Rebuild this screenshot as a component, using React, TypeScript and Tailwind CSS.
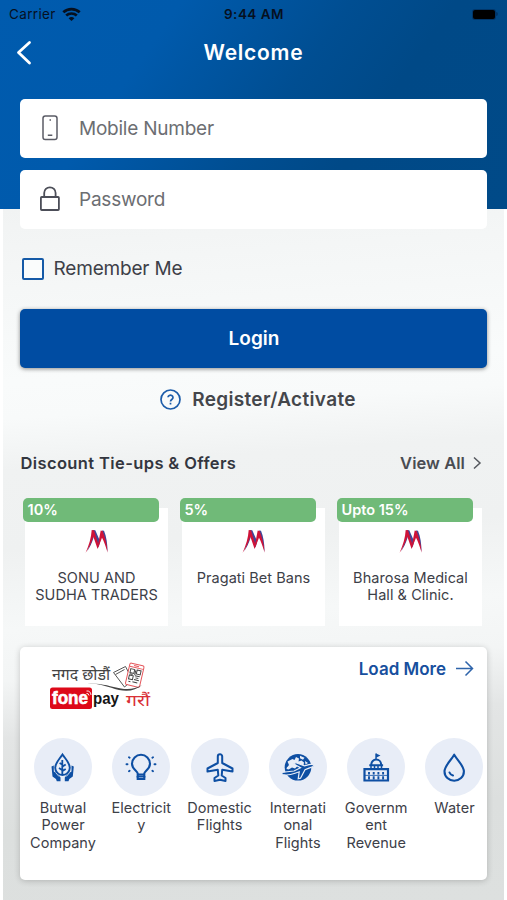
import React from "react";

const offers = [
  { badge: "10%", lines: ["SONU AND", "SUDHA TRADERS"] },
  { badge: "5%", lines: ["Pragati Bet Bans"] },
  { badge: "Upto 15%", lines: ["Bharosa Medical", "Hall & Clinic."] },
];

function MerchantLogo() {
  return (
    <svg width="24" height="24" viewBox="0 0 24 24" className="block">
      <path d="M8 1L10.300 1.200 15.200 12.500 13.600 18.500 8.500 7zM17 1.500L19 1.800C21.500 8 22.600 15 22.500 23 21.500 17 19.500 11 17.500 6.500zM7.300 6L8.800 8C7 14 4.500 19 2 22.500 4.500 17 6.200 11.500 7.300 6z" fill="#3f4799" />
      <path d="M6.700 1L9 1.300 13.200 14.500 15.700 1.600 17.600 2C20.300 9 22.200 16 22.600 23.800 21 18 19 12.500 17 8.800L12.600 20 8.300 7.500C6.800 13 4 19 .6 23.800 4 16 6.200 9 6.700 1Z" fill="#cf1338" />
    </svg>
  );
}

function WifiIcon() {
  return (
    <svg width="19" height="15" viewBox="0 0 19 15" fill="none" stroke="#06101f" strokeWidth="2.700">
      <path d="M1.300 5.200c4.500-4.200 11.900-4.200 16.400 0M4.200 8.600c3-2.800 7.600-2.800 10.600 0" />
      <path d="M6.600 11.200c1.700-1.500 4.100-1.500 5.800 0L9.500 14z" fill="#06101f" stroke="none" />
    </svg>
  );
}

function FonepayBanner() {
  return (
    <svg width="114" height="50" viewBox="0 0 114 50" className="block overflow-visible">
      <text x="4" y="19" fontSize="15.500" textLength="58" lengthAdjust="spacingAndGlyphs" fill="#444" className="font-['Noto_Sans_Devanagari','Lohit_Devanagari','Noto_Sans',sans-serif]">नगद छोडौं</text>
      <g fill="#fff" stroke="#555" strokeWidth="1">
        <path d="M65.500 11.500l12-6 7 13.500-8 7z" />
        <path d="M67.500 13.500l9-5" />
      </g>
      <g transform="rotate(13 86 14)">
        <rect x="79.500" y="3" width="14.500" height="22" rx="1.500" fill="#fff" stroke="#e5575c" />
        <path d="M80 6.500h13.500M84 4.800h5" stroke="#e5575c" />
        <path d="M81.500 8.500h4v4h-4zM88 8.500h4v4h-4zM81.500 15h4v4h-4z" fill="none" stroke="#444" strokeWidth="1" />
        <path d="M87 14.500h5M88 16.500h3M87 18.500h5M82 21.300h2M86 21h5M86.700 9v5M81.500 13.800h3" stroke="#444" />
      </g>
      <path d="M39 22.500c15-.7 23 3 34 5 8 1.300 15 .2 21-3.500-6 5.500-14 6.800-23 5-11-2.800-18-6.500-32-6.500z" fill="#444" />
      <rect x="2" y="26.500" width="42" height="21.500" rx="2.500" fill="#dd0919" />
      <text x="4" y="43.200" fontSize="18.500" textLength="36" lengthAdjust="spacingAndGlyphs" fontWeight="700" fill="#fff" stroke="#fff" strokeWidth=".6" className="font-['Liberation_Sans',sans-serif]">fone</text>
      <path d="M38.500 32.500q2-.5 2.500 2M38.500 30q4-.5 4.500 4" fill="none" stroke="#fff" strokeWidth=".9" />
      <text x="45" y="42.800" fontSize="17" textLength="26" lengthAdjust="spacingAndGlyphs" fontWeight="700" fill="#151515" className="font-['Liberation_Sans',sans-serif]">pay</text>
      <text x="78" y="45" fontSize="16" textLength="24" lengthAdjust="spacingAndGlyphs" fill="#d93036" className="font-['Noto_Sans_Devanagari','Lohit_Devanagari','Noto_Sans',sans-serif]">गरौं</text>
    </svg>
  );
}

function PowerIcon() {
  return (
    <svg width="32" height="32" viewBox="0 0 32 32" fill="none" stroke="#0e4fa3" strokeWidth="1.900">
      <path d="M15.500 3.500C12 8.700 8.200 12 8.200 16.700a7.300 7.300 0 0 0 14.600 0C22.800 12 19 8.700 15.500 3.500z" />
      <path d="M15.300 9v14M15.200 13.500l-2.600-1.500M15.500 15.500l3.200-2M15.500 20l3.200-2M15 19l-3-2" strokeWidth="1.800" />
      <g fill="#0e4fa3" stroke="none">
        <path d="M4.500 15.500l2.300-1v6l4 2.500 2.700 3.500v3.700H9.800L9 28l-3.500-2.500zM26.800 15.500l-2.300-1v6l-4 2.500-2.700 3.500v3.700h3.700l.8-2.200 3.500-2.500z" />
      </g>
      <path d="M9 22l3 3.500M22.300 22l-3 3.500" stroke="#e8edf7" strokeWidth=".8" />
    </svg>
  );
}

function BulbIcon() {
  return (
    <svg width="32" height="32" viewBox="0 0 32 32" fill="none" stroke="#0e4fa3" strokeWidth="2.100">
      <path d="M12.700 25.500v-3c0-2.300-5.700-4-5.700-9.700a9 9 0 0 1 18 0c0 5.700-5.700 7.400-5.700 9.700v3z" />
      <path d="M12.500 23.500h7M12.700 25v3h6.600v-3" />
      <path d="M4 6.300l.6.400M1.500 13.200h1M4 20.200l.6-.4M28 6.300l-.6.400M29.500 13.200h1M28 20.200l-.6-.4" strokeWidth="1.900" strokeLinecap="round" />
    </svg>
  );
}

function PlaneIcon() {
  return (
    <svg width="32" height="32" viewBox="0 0 32 32" fill="none" stroke="#0e4fa3" strokeWidth="2" strokeLinejoin="round">
      <path d="M13.800 12V5.500a2.200 2.200 0 0 1 4.400 0V12l10.300 5.500v3L18.200 18.800l-.5 5.700 3.800 2.500v3L16 28.800 10.500 30v-3l3.800-2.500-.5-5.700L3.500 20.500v-3z" />
    </svg>
  );
}

function GlobeIcon() {
  return (
    <svg width="34" height="32" viewBox="0 0 34 32" fill="none">
      <circle cx="17" cy="16.300" r="13.300" fill="#0e4fa3" />
      <path d="M6.500 10.500l5-2.500 2 1 1.500-3 3 1.500-.5 3 3-1 2.500 2-.5 3-4 2-2-1.500-2.500 2.500-3-1-2.500 1.500-2.500-1.500 2-2.500z" fill="#e8edf7" />
      <path d="M19 4.800l4.500 2-1.500 2-3-1.500zM24 10l3 2-2.500 1.500zM6 16l3 .5-1 2-2.500-.5z" fill="#e8edf7" />
      <path d="M1 21.500c3-.5 7-1 12-1.500l6.500-3.200-7-4 2.500-1 8.500 3 4.500-1.200c2.500-.5 4.500 0 5.500.8-1 1.400-3 2-5.500 2.700l-4 1.600-4.500 8.500-2.300.6 1-7-4.200 1.500C9.500 24 4.500 24.300 1 23.500z" fill="#0e4fa3" stroke="#e8edf7" strokeWidth="1.200" />
    </svg>
  );
}

function GovernmentIcon() {
  return (
    <svg width="32" height="32" viewBox="0 0 32 32" fill="none" stroke="#0e4fa3" strokeWidth="2">
      <path d="M16 9V2.500" strokeWidth="1.400" />
      <path d="M16 2.500l4.500 2-4.500 2.200z" fill="#0e4fa3" stroke="none" />
      <path d="M11.300 14v-.5a4.900 4.900 0 0 1 9.800 0v.5M9.300 14.200h13.800" />
      <path d="M11 18.500V15M21.500 18.500V15M14.500 18v-3M18 18v-3" strokeWidth="1.500" />
      <path d="M4.500 18.200h23.500V29.500H4.500z" strokeWidth="2.200" />
      <path d="M9 21v2.600M13.700 21v2.600M18.400 21v2.600M23.100 21v2.600M9 25.300v3.200M13.700 25.300v3.200M18.400 25.300v3.200M23.100 25.300v3.200" strokeWidth="1.900" />
      <path d="M5 24.400h23" strokeWidth=".8" />
    </svg>
  );
}

function WaterIcon() {
  return (
    <svg width="32" height="32" viewBox="0 0 32 32" fill="none" stroke="#0e4fa3" strokeWidth="2.100">
      <path d="M16.200 3.700C12.500 10 6.500 15 6.500 20.500a9.700 9.200 0 0 0 19.400 0C25.900 15 20 10 16.200 3.700z" strokeLinejoin="round" />
      <path d="M11.500 21.500c.6 1.600 1.700 2.500 3.500 3" strokeLinecap="round" />
    </svg>
  );
}

const services = [
  { icon: <PowerIcon />, lines: ["Butwal", "Power", "Company"] },
  { icon: <BulbIcon />, lines: ["Electricit", "y"] },
  { icon: <PlaneIcon />, lines: ["Domestic", "Flights"] },
  { icon: <GlobeIcon />, lines: ["Internati", "onal", "Flights"] },
  { icon: <GovernmentIcon />, lines: ["Governm", "ent", "Revenue"] },
  { icon: <WaterIcon />, lines: ["Water"] },
];

export default function App() {
  return (
    <div className="relative isolate h-[900px] w-[507px] overflow-hidden bg-white font-['Inter',sans-serif] text-[#3d4048]">
      <div className="absolute inset-x-0 top-0 -z-10 h-[209px] bg-[linear-gradient(125deg,#005bae_0%,#005aac_28%,#004e92_54%,#004987_70%,#004a88_100%)]" />
      <div className="absolute inset-x-[3px] bottom-0 top-[209px] -z-10 bg-[linear-gradient(176deg,#f1f3f3_0%,#f4f6f6_8%,#f9fbfb_24%,#f8fafa_29%,#f0f2f2_36%,#eff1f1_47%,#f6f8f8_58%,#f3f5f5_65%,#e3e5e5_73%,#dcdfde_86%,#dde0df_100%)]" />

      <div className="grid h-7 grid-cols-3 items-center px-[9px] text-[13.500px] text-[#06101f]">
        <div className="flex items-center gap-[6px]">
          <span className="tracking-[0.350px]">Carrier</span>
          <WifiIcon />
        </div>
        <span className="pl-px text-center font-semibold tracking-[0.500px]">9:44 AM</span>
        <div className="flex items-center justify-end gap-px">
          <span className="h-[9px] w-[22px] rounded-[2px] bg-black ring-1 ring-[#00366a]" />
          <span className="h-1 w-[2px] rounded-r bg-[#00366a]" />
        </div>
      </div>

      <header className="grid h-[49px] grid-cols-[40px_1fr_40px] items-center px-[15px]">
        <svg width="18" height="26" viewBox="0 0 18 26" fill="none" stroke="#fff" strokeWidth="2.800" strokeLinecap="round" strokeLinejoin="round">
          <path d="M14.500 2.500L3.500 12.500l11 10.500" />
        </svg>
        <h1 className="text-center text-[21px] font-semibold tracking-[0.750px] text-white">Welcome</h1>
      </header>

      <main className="px-5 pt-[21.500px]">
        <div className="flex flex-col gap-3 text-[19px] tracking-[-0.230px] text-[#6c6e72]">
          <div className="flex h-[59px] items-center rounded-[5px] bg-white pl-[17.500px]">
            <svg width="24" height="28" viewBox="0 0 24 28" fill="none" stroke="#5b5c66" strokeWidth="1.500">
              <rect x="5" y="2" width="14" height="23.500" rx="2.300" />
              <path d="M9.800 21.300h4.500M11.500 6H13" />
            </svg>
            <span className="ml-[17.500px] mt-[2px]">Mobile Number</span>
          </div>
          <div className="flex h-[59px] items-center rounded-[5px] bg-white pl-[17.500px]">
            <svg width="24" height="28" viewBox="0 0 24 28" fill="none" stroke="#4c4e58" strokeWidth="1.800">
              <rect x="2.900" y="12" width="18" height="13" rx=".8" />
              <path d="M6.200 12V8a5.700 5.700 0 0 1 11.400 0v4" />
            </svg>
            <span className="ml-[17.500px] mt-[2px]">Password</span>
          </div>
        </div>

        <label className="mt-[28px] flex h-6 items-center gap-[10px] pl-[1.500px] text-[19px] tracking-[-0.180px]">
          <span className="size-[22px] rounded-[2px] border-2 border-[#155aa7] bg-[#fafcfc]" />
          <span className="mt-[2px]">Remember Me</span>
        </label>

        <button className="mt-[28px] flex h-[59px] w-full items-center justify-center rounded-[5px] bg-[#004ca2] pl-px pt-[2px] text-[19px] font-semibold text-white shadow-[0_1px_4px_rgba(0,0,0,0.450)]">
          Login
        </button>

        <div className="mt-[18px] flex h-7 items-center justify-center gap-[11px] pl-[9px] text-[19px] font-semibold tracking-[0.330px] text-[#44464b]">
          <svg width="21" height="21" viewBox="0 0 21 21" fill="none" stroke="#1c5ca9" strokeWidth="1.700">
            <circle cx="10.500" cy="10.500" r="9.500" />
            <path d="M8 8.300a2.500 2.300 0 1 1 4 2c-1.100.8-1.500 1-1.500 2.100M10.500 13.700v1.800" />
          </svg>
          <span className="mt-[2px]">Register/Activate</span>
        </div>

        <div className="mt-[37.500px] flex h-6 items-center justify-between text-[16.500px] font-semibold">
          <h2 className="pl-[0.500px] tracking-[0.380px] text-[#33363f]">Discount Tie-ups &amp; Offers</h2>
          <div className="flex items-center gap-[7px] pr-1 text-[#4a4c52]">
            <span className="tracking-[0.050px]">View All</span>
            <svg width="11" height="14" viewBox="0 0 11 14" fill="none" stroke="#55585e" strokeWidth="1.500">
              <path d="M2 1.500L8 7l-6 5.500" />
            </svg>
          </div>
        </div>

        <section className="mt-[22.500px] grid grid-cols-[143px_143px_143px] gap-[14px] pl-[5px]">
          {offers.map((offer) => (
            <article key={offer.badge} className="flex h-[128px] flex-col items-center bg-[linear-gradient(transparent_10px,white_10px)]">
              <div className="-ml-[12px] flex h-[24px] w-[136px] shrink-0 items-center rounded-[5px] bg-[#70ba78] pl-[5px] pt-px text-[14.500px] font-semibold text-white">
                {offer.badge}
              </div>
              <div className="mt-[7px]"><MerchantLogo /></div>
              <p className="mt-[16px] whitespace-nowrap text-center text-[14.500px] leading-[17.500px] tracking-[0.050px]">
                {offer.lines.map((line) => <span key={line} className="block">{line}</span>)}
              </p>
            </article>
          ))}
        </section>

        <section className="mt-[21px] h-[233px] rounded-[5px] bg-white shadow-[0_1px_6px_rgba(0,0,0,0.200)]">
          <div className="flex h-[91px] items-start justify-between pl-[28px] pr-[13.500px]">
            <div className="mt-[14px]"><FonepayBanner /></div>
            <div className="mt-[10px] flex items-center gap-[8.500px] text-[17px] font-semibold leading-6 text-[#174f9e]">
              <span>Load More</span>
              <svg width="19" height="18" viewBox="0 0 19 18" fill="none" stroke="#2e64aa" strokeWidth="1.500">
                <path d="M1 8.500h16.500M10.500 1.500l7 7-7 7" />
              </svg>
            </div>
          </div>
          <div className="flex gap-[12.300px] pl-[10px]">
            {services.map((service) => (
              <div key={service.lines[0]} className="flex w-[66px] shrink-0 flex-col items-center">
                <div className="flex size-[58px] items-center justify-center rounded-full bg-[#e8edf7]">{service.icon}</div>
                <p className="mt-[3px] whitespace-nowrap text-center text-[14.500px] leading-[17.500px] tracking-[0.020px]">
                  {service.lines.map((line) => <span key={line} className="block">{line}</span>)}
                </p>
              </div>
            ))}
          </div>
        </section>
      </main>
    </div>
  );
}
